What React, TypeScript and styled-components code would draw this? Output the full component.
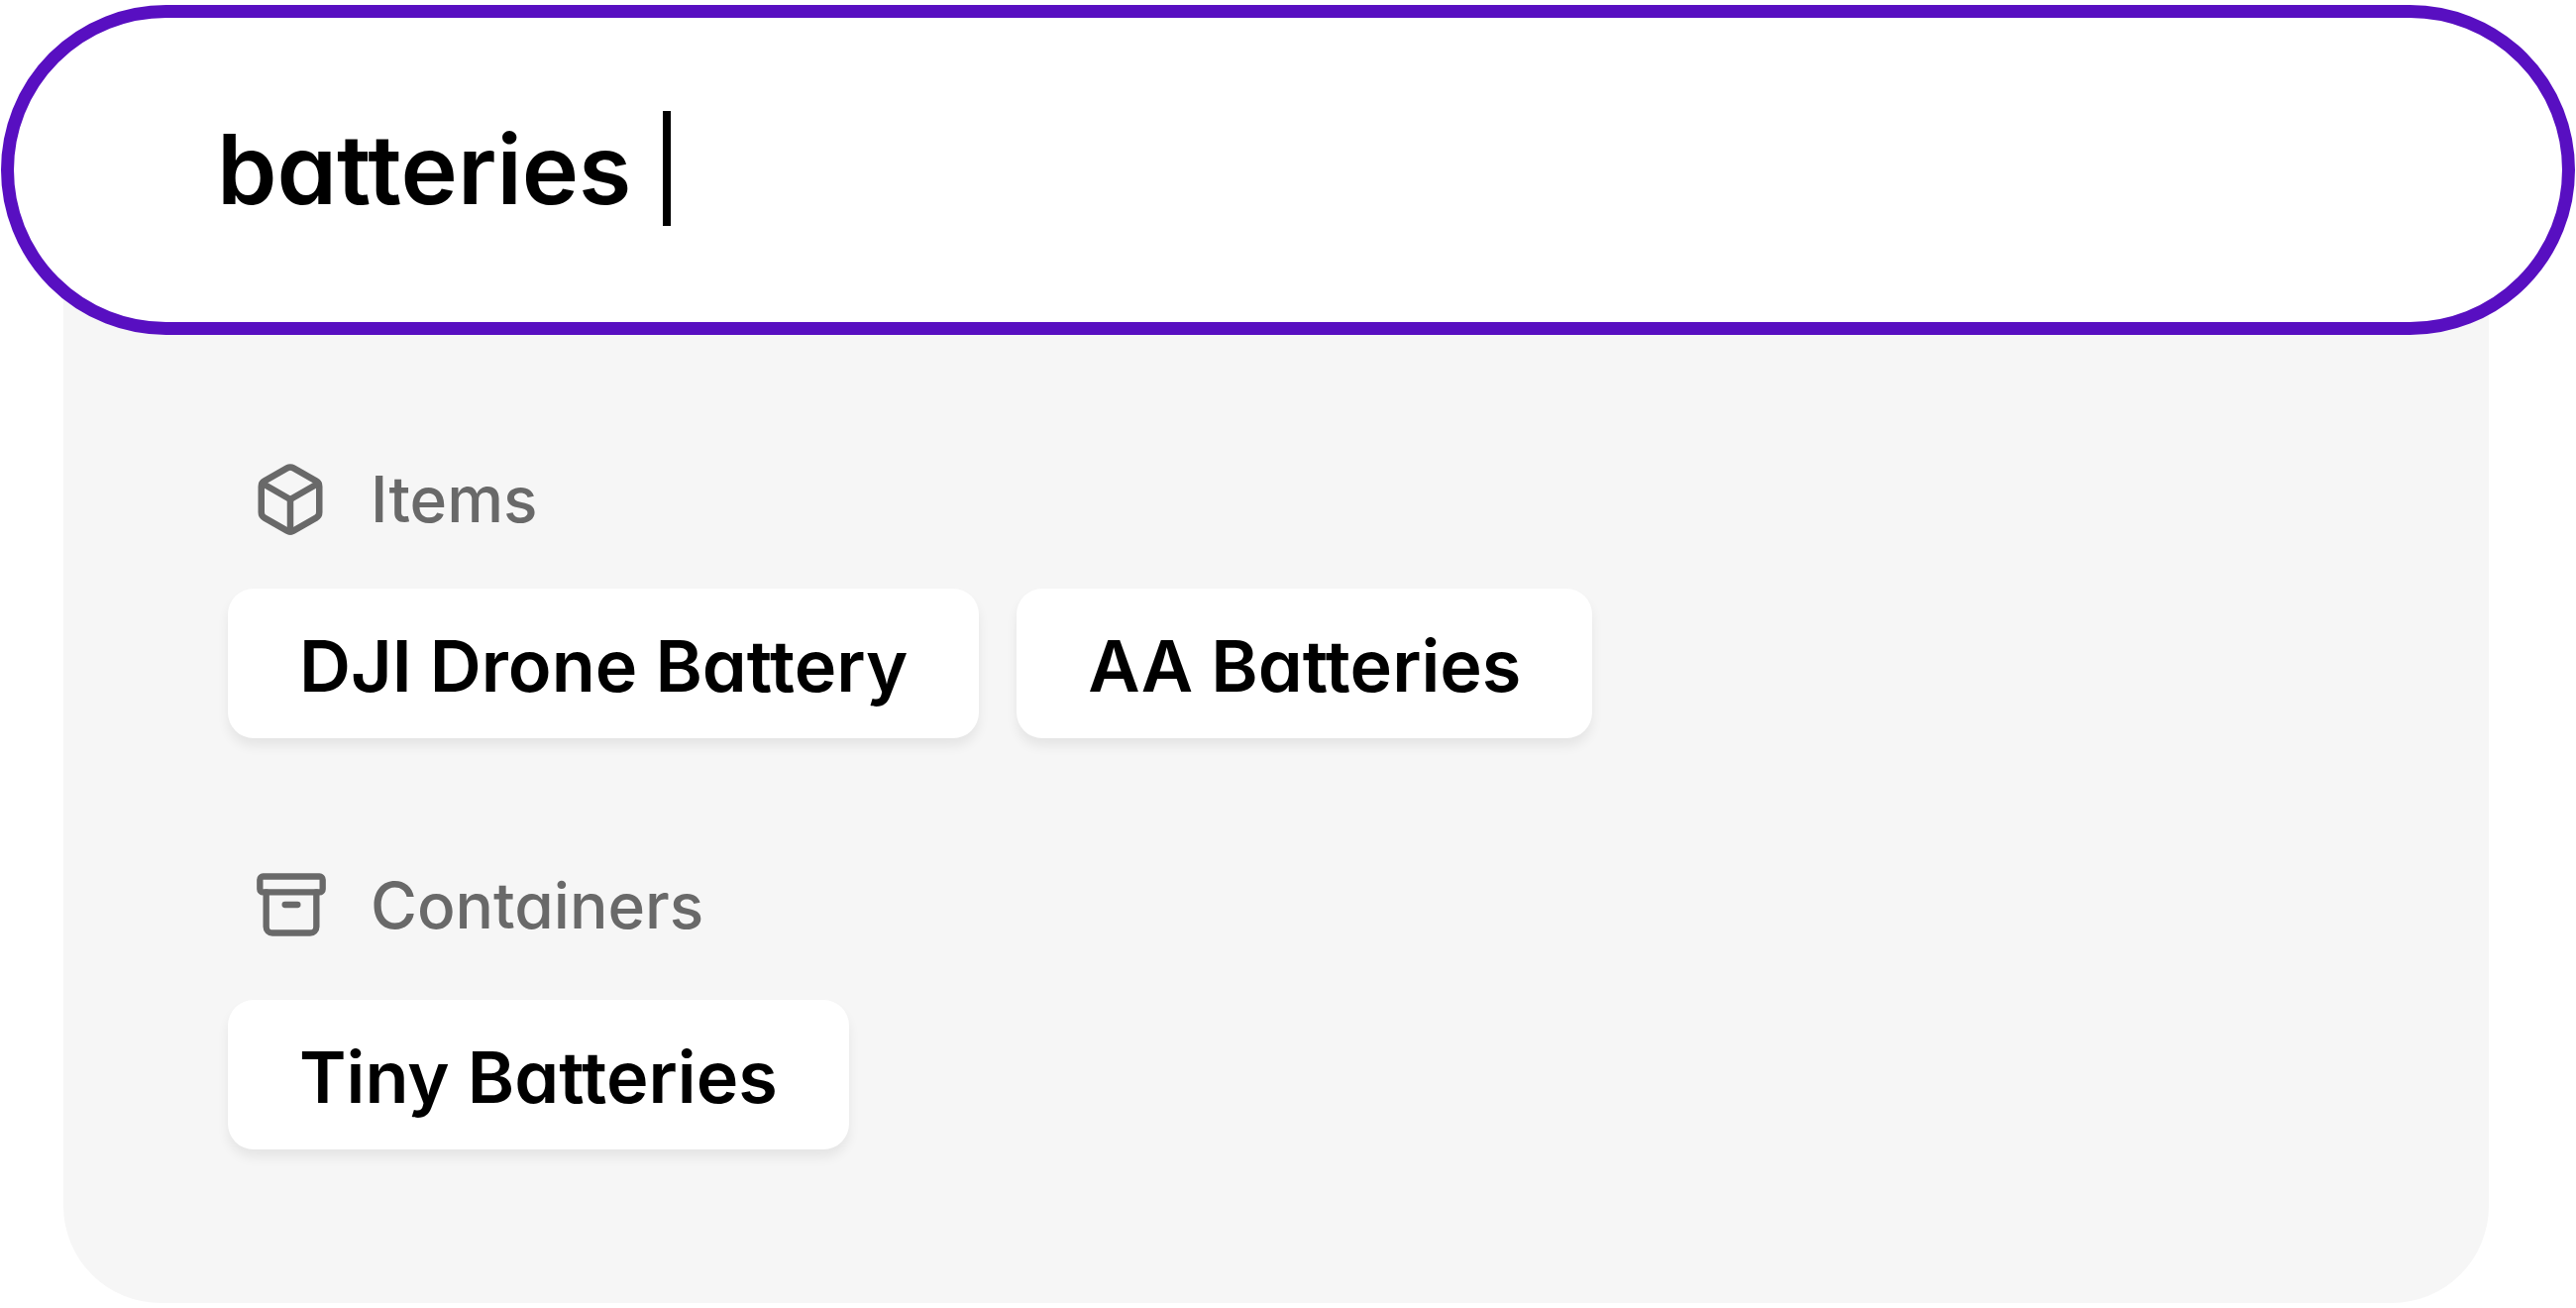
import React, { useState } from "react";
import styled, { createGlobalStyle } from "styled-components";
import { Archive, Box } from "lucide-react";

const GlobalStyle = createGlobalStyle`
  *, *::before, *::after { box-sizing: border-box; }
  body {
    margin: 0;
    background: #ffffff;
    color: #000000;
    font-family: Inter, "Liberation Sans", sans-serif;
    font-feature-settings: "cv11" 1;
  }
`;

const Page = styled.main`
  padding: 5px 1px;
`;

const SearchBar = styled.label`
  position: relative;
  z-index: 1;
  display: flex;
  align-items: center;
  padding: 94px 205px 97px;
  border: 13px solid #580fc1;
  border-radius: 167px;
  background: #ffffff;
  cursor: text;
`;

const SearchInput = styled.input`
  field-sizing: content;
  min-width: 0;
  height: 116px;
  padding: 0;
  border: 0;
  outline: 0;
  background: transparent;
  color: inherit;
  caret-color: transparent;
  font: inherit;
  font-feature-settings: inherit;
  font-size: 97px;
  font-weight: 600;
`;

const Caret = styled.span`
  width: 8px;
  height: 116px;
  margin-left: 32px;
  background: #000000;
`;

const Results = styled.div`
  display: flex;
  flex-direction: column;
  gap: 130px;
  margin: -100px 87px 0 63px;
  padding: 227px 166px 155px;
  border-radius: 0 0 98px 98px;
  background: #f6f6f6;
`;

const Group = styled.section<{ $gap: number }>`
  display: flex;
  flex-direction: column;
  gap: ${({ $gap }) => $gap}px;
`;

const GroupHeader = styled.header`
  display: flex;
  align-items: center;
  gap: 42px;
  padding-left: 24px;
  color: #696969;
`;

const IconSlot = styled.span`
  display: flex;
  justify-content: flex-end;
  width: 78px;
  height: 78px;
`;

const GroupTitle = styled.h2`
  margin: 0;
  font-size: 64px;
  font-weight: 500;
  line-height: 78px;
`;

const Chips = styled.div`
  display: flex;
  flex-wrap: wrap;
  gap: 38px;
`;

const Chip = styled.button`
  padding: 34px 72px 29px;
  border: 0;
  border-radius: 26px;
  background: #ffffff;
  box-shadow: 0 8px 12px rgba(0, 0, 0, 0.07);
  color: inherit;
  font: inherit;
  font-feature-settings: inherit;
  font-size: 72px;
  font-weight: 600;
  line-height: 88px;
  cursor: pointer;
`;

const groups = [
  { title: "Items", Icon: Box, iconSize: 78, gap: 51, results: ["DJI Drone Battery", "AA Batteries"] },
  { title: "Containers", Icon: Archive, iconSize: 76, gap: 56, results: ["Tiny Batteries"] },
];

export default function App() {
  const [query, setQuery] = useState("batteries");

  return (
    <>
      <GlobalStyle />
      <Page>
        <SearchBar>
          <SearchInput
            type="text"
            aria-label="Search"
            value={query}
            onChange={(event) => setQuery(event.target.value)}
          />
          <Caret />
        </SearchBar>
        <Results>
          {groups.map(({ title, Icon, iconSize, gap, results }) => (
            <Group key={title} $gap={gap}>
              <GroupHeader>
                <IconSlot>
                  <Icon size={iconSize} strokeWidth={2} aria-hidden="true" />
                </IconSlot>
                <GroupTitle>{title}</GroupTitle>
              </GroupHeader>
              <Chips>
                {results.map((name) => (
                  <Chip key={name} type="button">{name}</Chip>
                ))}
              </Chips>
            </Group>
          ))}
        </Results>
      </Page>
    </>
  );
}
